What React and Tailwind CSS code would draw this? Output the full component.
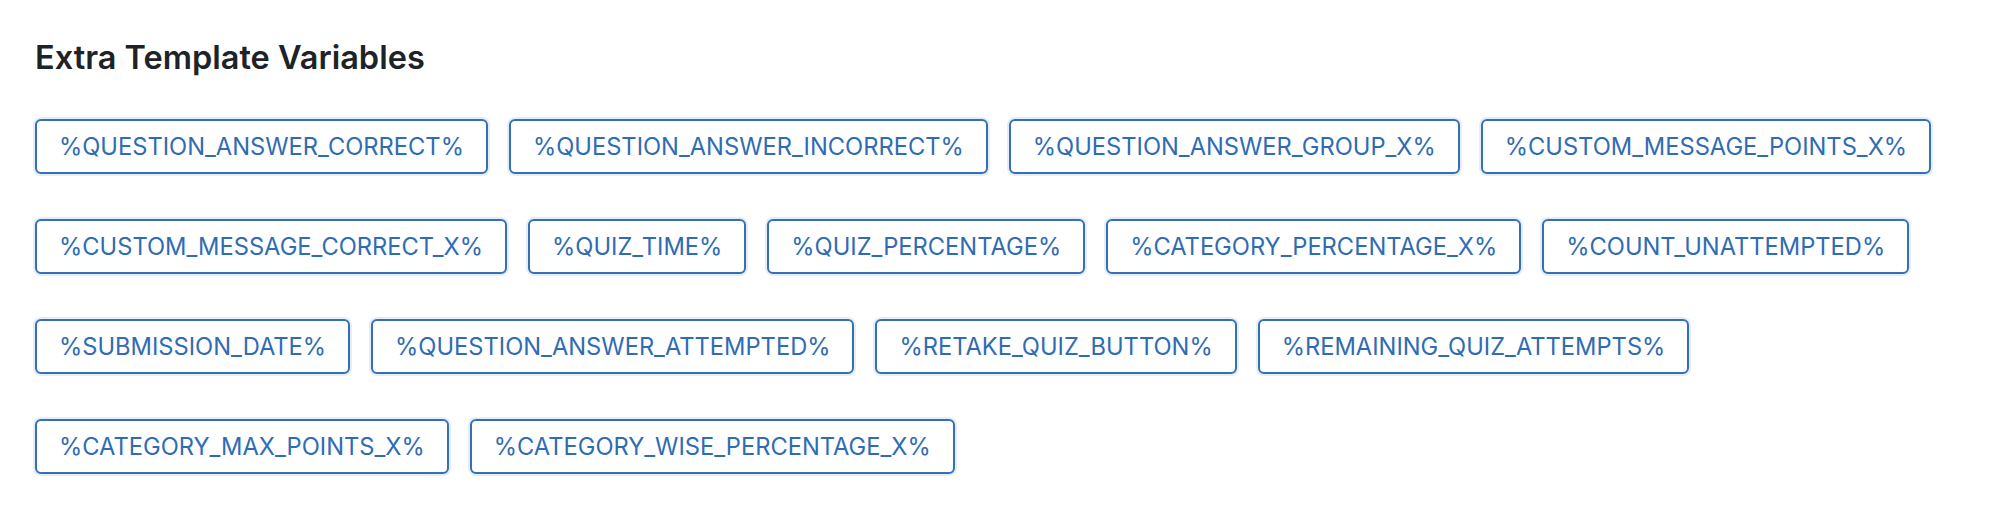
import React from 'react';

const rows = [
    ['%QUESTION_ANSWER_CORRECT%', '%QUESTION_ANSWER_INCORRECT%', '%QUESTION_ANSWER_GROUP_X%', '%CUSTOM_MESSAGE_POINTS_X%'],
    ['%CUSTOM_MESSAGE_CORRECT_X%', '%QUIZ_TIME%', '%QUIZ_PERCENTAGE%', '%CATEGORY_PERCENTAGE_X%', '%COUNT_UNATTEMPTED%'],
    ['%SUBMISSION_DATE%', '%QUESTION_ANSWER_ATTEMPTED%', '%RETAKE_QUIZ_BUTTON%', '%REMAINING_QUIZ_ATTEMPTS%'],
    ['%CATEGORY_MAX_POINTS_X%', '%CATEGORY_WISE_PERCENTAGE_X%'],
];

const App = () => {
    return (
        <div className="min-h-screen bg-white pl-[35px] pt-[38px]" style={{ fontFamily: 'Inter, "Noto Sans", sans-serif' }}>
            <h2 className="text-[32.5px] leading-[40px] font-semibold text-[#1d2327]">
                Extra Template Variables
            </h2>

            {/* variable buttons */}
            <div className="mt-[41px] flex flex-col gap-[45px]">
                {rows.map((row, i) => (
                    <div key={i} className="flex gap-[21px]">
                        {row.map((name) => (
                            <button
                                key={name}
                                className="h-[55px] flex items-center px-[22px] border-2 border-[#3570b5] rounded-[6px] bg-white text-[#2f6cb3] text-[23.7px] leading-none shadow-[0_0_0_2px_#e3eefa]"
                            >
                                {name}
                            </button>
                        ))}
                    </div>
                ))}
            </div>
        </div>
    );
};

export default App;
